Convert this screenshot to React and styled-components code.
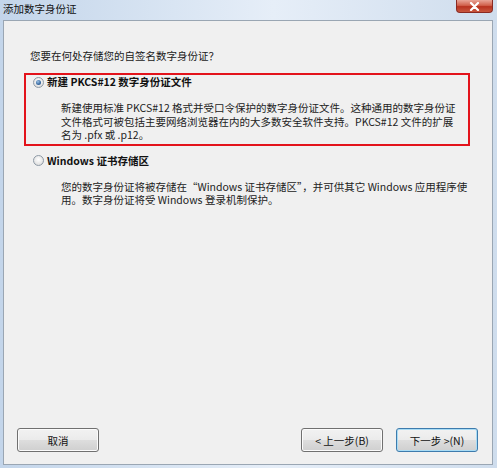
import styled, { createGlobalStyle } from "styled-components";

const GlobalStyle = createGlobalStyle`
  html, body {
    margin: 0;
    padding: 0;
  }
  body {
    font-family: "Noto Sans CJK SC", "Noto Sans", sans-serif;
  }
`;

const Window = styled.div`
  width: 497px;
  height: 468px;
  display: flex;
  flex-direction: column;
  background: linear-gradient(90deg, #c3d5ea 0%, #d9e5f3 35%, #e6eef8 55%, #cfdded 100%);
  box-sizing: border-box;
  overflow: hidden;
`;

const TitleBar = styled.div`
  height: 20px;
  display: flex;
  justify-content: space-between;
  align-items: flex-start;
  flex-shrink: 0;
`;

const Title = styled.div`
  padding: 2px 0 0 3px;
  font-size: 10.5px;
  line-height: 14px;
  color: #111;
`;

const CloseButton = styled.div`
  width: 37px;
  height: 13px;
  margin-right: 4px;
  border: 1px solid #8a2a22;
  border-top: none;
  border-radius: 0 0 4px 4px;
  background: linear-gradient(180deg, #e9a597 0%, #d1614c 45%, #b8321f 55%, #c8573f 100%);
  box-sizing: border-box;
  display: flex;
  align-items: center;
  justify-content: center;
  svg {
    display: block;
  }
`;

const Panel = styled.div`
  flex: 1;
  margin: 0 4px 3px 3px;
  border: 1px solid #9aa6b3;
  background: #f0f0f0;
  display: flex;
  flex-direction: column;
  justify-content: space-between;
`;

const Content = styled.div`
  padding: 28px 22px 0 20px;
  display: flex;
  flex-direction: column;
`;

const Question = styled.div`
  padding-left: 6px;
  font-size: 10.5px;
  line-height: 14px;
  color: #1a1a1a;
  margin-bottom: 10px;
`;

const Option = styled.div`
  border: 2px solid ${(p) => (p.$highlight ? "#e3131b" : "transparent")};
  padding: 0 0 2px 7px;
  margin-bottom: 6px;
`;

const OptionRow = styled.div`
  display: flex;
  align-items: center;
  gap: 3px;
  height: 14px;
  margin-bottom: 12px;
`;

const Radio = styled.span`
  width: 11px;
  height: 11px;
  border-radius: 50%;
  border: 1px solid #8e9aa6;
  box-sizing: border-box;
  background: radial-gradient(circle at 50% 40%, #ffffff 0%, #e6e6e6 60%, #d0d0d0 100%);
  display: flex;
  align-items: center;
  justify-content: center;
  &::after {
    content: "";
    width: 5px;
    height: 5px;
    border-radius: 50%;
    background: radial-gradient(circle at 40% 35%, #9fc3e6 0%, #3d6fa5 55%, #1e4274 100%);
    display: ${(p) => (p.$checked ? "block" : "none")};
  }
`;

const Label = styled.span`
  font-size: 10.5px;
  font-weight: 700;
  line-height: 14px;
  color: #111;
`;

const Description = styled.div`
  padding-left: 28px;
  font-size: 10.5px;
  line-height: 13.5px;
  color: #222;
  white-space: nowrap;
`;

const Footer = styled.div`
  display: flex;
  justify-content: space-between;
  align-items: center;
  padding: 0 14px 12px 13px;
`;

const ButtonGroup = styled.div`
  display: flex;
  gap: 13px;
`;

const Button = styled.button`
  width: 82px;
  height: 24px;
  padding: 0;
  border-radius: 3px;
  border: 1px solid ${(p) => (p.$default ? "#3d7bad" : "#707070")};
  background: linear-gradient(180deg, #f2f2f2 0%, #ebebeb 48%, #dddddd 52%, #cfcfcf 100%);
  box-shadow: inset 0 0 0 1px ${(p) => (p.$default ? "#a9dcf5" : "#fbfbfb")};
  font-family: "Noto Sans CJK SC", "Noto Sans", sans-serif;
  font-size: 10.5px;
  color: #111;
  cursor: default;
`;

const App = () => {
  return (
    <Window>
      <GlobalStyle />
      <TitleBar>
        <Title>添加数字身份证</Title>
        <CloseButton>
          <svg width="11" height="9" viewBox="0 0 11 9">
            <path d="M2 1 L9 8 M9 1 L2 8" stroke="#ffffff" strokeWidth="2.2" strokeLinecap="round" />
          </svg>
        </CloseButton>
      </TitleBar>
      <Panel>
        <Content>
          <Question>您要在何处存储您的自签名数字身份证？</Question>
          <Option $highlight>
            <OptionRow>
              <Radio $checked />
              <Label>新建 PKCS#12 数字身份证文件</Label>
            </OptionRow>
            <Description>
              新建使用标准 PKCS#12 格式并受口令保护的数字身份证文件。这种通用的数字身份证
              <br />
              文件格式可被包括主要网络浏览器在内的大多数安全软件支持。PKCS#12 文件的扩展
              <br />
              名为 .pfx 或 .p12。
            </Description>
          </Option>
          <Option>
            <OptionRow>
              <Radio />
              <Label>Windows 证书存储区</Label>
            </OptionRow>
            <Description>
              您的数字身份证将被存储在“Windows 证书存储区”，并可供其它 Windows 应用程序使
              <br />
              用。数字身份证将受 Windows 登录机制保护。
            </Description>
          </Option>
        </Content>
        <Footer>
          <Button>取消</Button>
          <ButtonGroup>
            <Button>&lt; 上一步(B)</Button>
            <Button $default>下一步 &gt;(N)</Button>
          </ButtonGroup>
        </Footer>
      </Panel>
    </Window>
  );
};

export default App;
